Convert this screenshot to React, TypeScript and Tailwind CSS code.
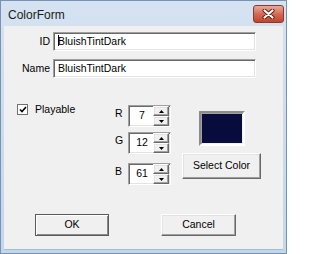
import React from "react";

const sunken =
  "border border-t-[#a0a0a0] border-l-[#a0a0a0] border-b-white border-r-white shadow-[inset_1px_1px_0_#696969,inset_-1px_-1px_0_#e3e3e3] bg-white";

const raised =
  "border border-t-white border-l-white border-b-[#696969] border-r-[#696969] shadow-[inset_-1px_-1px_0_#a0a0a0,inset_1px_1px_0_#e3e3e3] bg-[#f0f0f0]";

function Arrow({ down }: { down?: boolean }) {
  return (
    <svg width="5" height="3" viewBox="0 0 5 3">
      <path d={down ? "M0 0H5L2.5 3Z" : "M0 3H5L2.5 0Z"} fill="#000" />
    </svg>
  );
}

function Spin({ label, value, className }: { label: string; value: string; className: string }) {
  return (
    <div className={`flex items-center ${className}`}>
      <span className="w-[13px] -mt-[5px]">{label}</span>
      <div className={`w-[43px] h-[22px] flex items-center ${sunken}`}>
        <span className="flex-1 text-center pl-[2px]">{value}</span>
        <div className="flex flex-col w-[16px] h-[20px] mr-px">
          <div className={`flex-1 flex items-center justify-center ${raised}`}>
            <Arrow />
          </div>
          <div className={`flex-1 flex items-center justify-center ${raised}`}>
            <Arrow down />
          </div>
        </div>
      </div>
    </div>
  );
}

export default function App() {
  return (
    <div className="w-[287px] h-[254px] flex flex-col bg-gradient-to-b from-[#d5e2f1] to-[#c2d6ec] border border-[#7792b3] font-['Liberation_Sans',Arial,sans-serif] text-[10.5px] text-black">
      {/* title bar */}
      <div className="h-[25px] flex items-start justify-between pl-[7px] pr-[2px]">
        <span className="text-[12px] text-[#1b1b1b] mt-[5px]">ColorForm</span>
        <button className="mt-[4px] w-[31px] h-[18px] rounded-[3px] border border-[#8a3b2c] bg-gradient-to-b from-[#e9a99a] via-[#d46a54] to-[#c0442d] flex items-center justify-center">
          <svg width="13" height="10" viewBox="0 0 13 10">
            <path d="M2.5 1.5L10.5 8.5M10.5 1.5L2.5 8.5" stroke="#5a1a10" strokeWidth="4" strokeLinecap="round" />
            <path d="M2.5 1.5L10.5 8.5M10.5 1.5L2.5 8.5" stroke="#fff" strokeWidth="2.2" strokeLinecap="round" />
          </svg>
        </button>
      </div>

      {/* client area */}
      <div className="flex-1 mx-[3px] mb-[3px] bg-[#f0f0f0] pt-[6px] border-b border-[#9cc3d6]">
        <div className="grid grid-cols-[46px_203px] gap-x-[3px] gap-y-[8px] items-center">
          <span className="text-right">ID</span>
          <div className={`h-[19px] flex items-center pl-[4px] ${sunken}`}>
            <span className="relative">
              <span className="absolute left-0 top-[1px] w-px h-[11px] bg-black" />
              BluishTintDark
            </span>
          </div>
          <span className="text-right">Name</span>
          <div className={`h-[19px] flex items-center pl-[4px] ${sunken}`}>BluishTintDark</div>
        </div>

        <div className="flex items-start mt-[24px] h-[83px]">
          <div className="w-[111px] pl-[13px] flex items-center gap-[7px]">
            <div className="w-[11px] h-[11px] border border-[#707070] bg-white flex items-center justify-center">
              <svg width="8" height="7" viewBox="0 0 8 7">
                <path d="M1 3.5L3 5.5L7 1" stroke="#000" strokeWidth="1.6" fill="none" />
              </svg>
            </div>
            <span>Playable</span>
          </div>

          <div className="flex flex-col mt-[3px]">
            <Spin label="R" value="7" className="" />
            <Spin label="G" value="12" className="mt-[5px]" />
            <Spin label="B" value="61" className="mt-[9px]" />
          </div>

          <div className="ml-[11px] flex flex-col items-center mt-[9px]">
            <div className="w-[46px] h-[35px] border-2 border-t-[#8c8c8c] border-l-[#8c8c8c] border-b-white border-r-white shadow-[inset_1px_1px_0_#a0a0a0] p-px">
              <div className="w-full h-full bg-[rgb(7,12,61)]" />
            </div>
            <button className={`mt-[7px] w-[79px] h-[26px] ${raised}`}>Select Color</button>
          </div>
        </div>

        <div className="flex mt-[29px] pl-[31px] gap-[52px]">
          <button className="w-[74px] h-[22px] border border-[#5a5a5a] bg-[#f0f0f0] shadow-[inset_1px_1px_0_#fff,inset_-1px_-1px_0_#8a8a8a]">
            OK
          </button>
          <button className={`w-[75px] h-[22px] ${raised}`}>Cancel</button>
        </div>
      </div>
    </div>
  );
}
